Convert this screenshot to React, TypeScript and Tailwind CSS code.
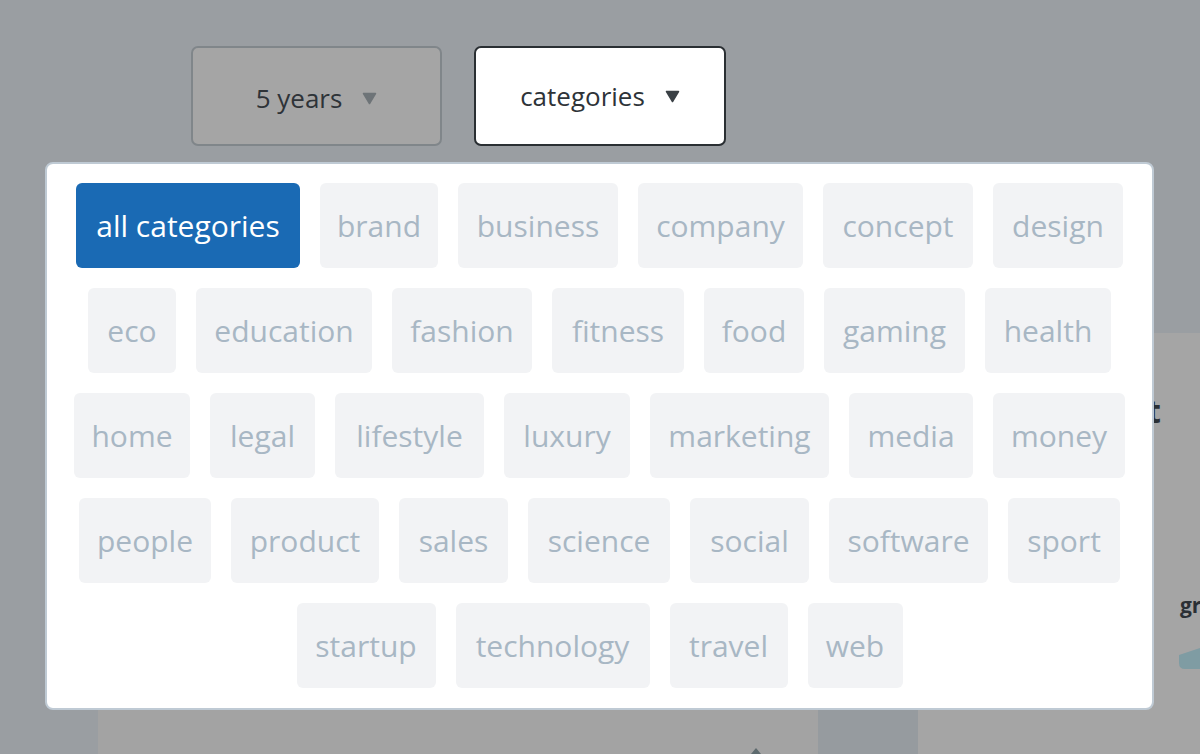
import React from "react";

interface Category {
  name: string;
  width: string;
}

const rows: Category[] = [
  { name: "all categories", width: "w-[224px]" },
  { name: "brand", width: "w-[118px]" },
  { name: "business", width: "w-[160px]" },
  { name: "company", width: "w-[165px]" },
  { name: "concept", width: "w-[150px]" },
  { name: "design", width: "w-[130px]" },
  { name: "eco", width: "w-[88px]" },
  { name: "education", width: "w-[176px]" },
  { name: "fashion", width: "w-[140px]" },
  { name: "fitness", width: "w-[132px]" },
  { name: "food", width: "w-[100px]" },
  { name: "gaming", width: "w-[141px]" },
  { name: "health", width: "w-[126px]" },
  { name: "home", width: "w-[116px]" },
  { name: "legal", width: "w-[105px]" },
  { name: "lifestyle", width: "w-[149px]" },
  { name: "luxury", width: "w-[126px]" },
  { name: "marketing", width: "w-[179px]" },
  { name: "media", width: "w-[124px]" },
  { name: "money", width: "w-[132px]" },
  { name: "people", width: "w-[132px]" },
  { name: "product", width: "w-[148px]" },
  { name: "sales", width: "w-[109px]" },
  { name: "science", width: "w-[142px]" },
  { name: "social", width: "w-[119px]" },
  { name: "software", width: "w-[159px]" },
  { name: "sport", width: "w-[112px]" },
  { name: "startup", width: "w-[139px]" },
  { name: "technology", width: "w-[194px]" },
  { name: "travel", width: "w-[118px]" },
  { name: "web", width: "w-[95px]" },
];

function Caret({ color }: { color: string }) {
  return (
    <svg width="15" height="13" viewBox="0 0 15 13" className="shrink-0">
      <path
        d="M1.5 1.5 L13.5 1.5 L7.5 11.5 Z"
        fill={color}
        stroke={color}
        strokeWidth="1.5"
        strokeLinejoin="round"
      />
    </svg>
  );
}

function App() {
  const selected = "all categories";

  return (
    <div className="relative h-[754px] w-[1200px] overflow-hidden bg-[#9a9ea2] font-['Open_Sans',sans-serif] text-[#2b3035]">
      {/* filters */}
      <div className="flex gap-[32px] pl-[191px] pt-[46px]">
        <button className="flex h-[100px] w-[251px] items-center justify-center gap-[20px] rounded-[7px] border-2 border-[#80868a] bg-[#a5a5a5] pt-[4px] text-[26px] text-[#2e3338]">
          <span>5 years</span>
          <Caret color="#6e7478" />
        </button>
        <button className="flex h-[100px] w-[252px] items-center justify-center gap-[20px] rounded-[7px] border-2 border-[#2a2f33] bg-white text-[26px] text-[#2e3338]">
          <span>categories</span>
          <Caret color="#3a4045" />
        </button>
      </div>

      {/* page content under the overlay */}
      <div className="mt-[187px] flex h-[421px]">
        <div className="ml-[98px] flex w-[720px] shrink-0 flex-col justify-end bg-[#a3a3a3]">
          <svg width="10" height="6" viewBox="0 0 10 6" className="ml-[653px]">
            <path d="M5 0 L10 6 L0 6 Z" fill="#5d6a6e" />
          </svg>
        </div>
        <div className="w-[100px] shrink-0 bg-[#969b9f]" />
        <div className="flex min-w-0 flex-1 flex-col overflow-hidden bg-[#a5a5a5]">
          <div className="mt-[62px] w-[243px] shrink-0 text-right text-[32px] font-bold leading-[32px] text-[#2b3035]">
            Best
          </div>
          <div className="ml-[262px] mt-[164px] whitespace-nowrap text-[21px] font-bold leading-[28px] text-[#2b3035]">
            growth
          </div>
          <svg width="30" height="26" viewBox="0 0 30 26" className="ml-[261px] mt-[26px] shrink-0">
            <path d="M0 10 L30 0 L30 24 L6 24 Q0 24 0 18 Z" fill="#7f9ca3" />
          </svg>
        </div>
      </div>

      {/* categories popover */}
      <div className="absolute left-[45px] top-[162px] w-[1109px] rounded-[8px] border-2 border-[#bfcad4] bg-white px-[25px] pb-[20px] pt-[19px]">
        <div className="flex flex-wrap justify-center gap-[20px]">
          {rows.map((c) => (
            <button
              key={c.name}
              className={
                c.name === selected
                  ? `flex h-[85px] ${c.width} items-center justify-center rounded-[6px] bg-[#1a6ab4] text-[30px] leading-none text-white`
                  : `flex h-[85px] ${c.width} items-center justify-center rounded-[6px] bg-[#f2f3f5] text-[30px] leading-none text-[#a8b7c4]`
              }
            >
              {c.name}
            </button>
          ))}
        </div>
      </div>
    </div>
  );
}

export default App;
